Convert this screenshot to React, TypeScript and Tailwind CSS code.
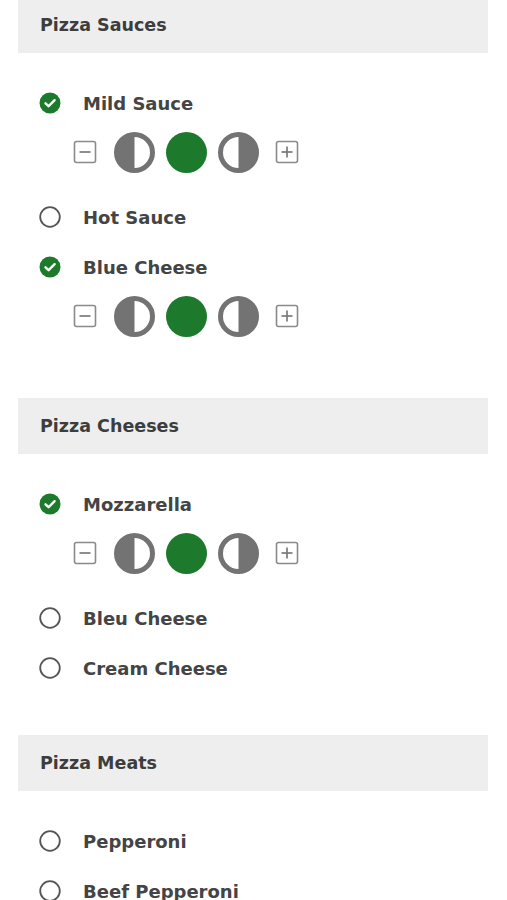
import React from "react";

type Topping = {
  name: string;
  checked: boolean;
};

type Section = {
  title: string;
  items: Topping[];
};

const SECTIONS: Section[] = [
  {
    title: "Pizza Sauces",
    items: [
      { name: "Mild Sauce", checked: true },
      { name: "Hot Sauce", checked: false },
      { name: "Blue Cheese", checked: true },
    ],
  },
  {
    title: "Pizza Cheeses",
    items: [
      { name: "Mozzarella", checked: true },
      { name: "Bleu Cheese", checked: false },
      { name: "Cream Cheese", checked: false },
    ],
  },
  {
    title: "Pizza Meats",
    items: [
      { name: "Pepperoni", checked: false },
      { name: "Beef Pepperoni", checked: false },
    ],
  },
];

const GREEN = "#1d7a2c";

const CheckIcon = ({ checked }: { checked: boolean }) => {
  if (checked) {
    return (
      <svg width="22" height="22" viewBox="0 0 22 22">
        <circle cx="11" cy="11" r="10.5" fill={GREEN} />
        <path
          d="M6.5 11.3 L9.6 14.2 L15.6 8.2"
          fill="none"
          stroke="#fff"
          strokeWidth="2.4"
          strokeLinecap="round"
          strokeLinejoin="round"
        />
      </svg>
    );
  }
  return (
    <svg width="22" height="22" viewBox="0 0 22 22">
      <circle cx="11" cy="11" r="9.8" fill="none" stroke="#555" strokeWidth="1.8" />
    </svg>
  );
};

const SquareBtn = ({ plus }: { plus?: boolean }) => (
  <svg width="24" height="24" viewBox="0 0 24 24">
    <rect x="1.5" y="1.5" width="21" height="21" rx="2" fill="none" stroke="#8a8a8a" strokeWidth="1.6" />
    <line x1="6.5" y1="12" x2="17.5" y2="12" stroke="#7a7a7a" strokeWidth="1.7" />
    {plus && <line x1="12" y1="6.5" x2="12" y2="17.5" stroke="#7a7a7a" strokeWidth="1.7" />}
  </svg>
);

// half filled circle, side = which half is grey
const HalfCircle = ({ side }: { side: "left" | "right" }) => (
  <svg width="41" height="41" viewBox="0 0 41 41">
    <circle cx="20.5" cy="20.5" r="18" fill="#fff" stroke="#737373" strokeWidth="5" />
    {side === "left" ? (
      <path d="M20.5 2 A18.5 18.5 0 0 0 20.5 39 Z" fill="#737373" />
    ) : (
      <path d="M20.5 2 A18.5 18.5 0 0 1 20.5 39 Z" fill="#737373" />
    )}
  </svg>
);

const Amounts = () => (
  <div className="flex h-[48px] mb-[16px] items-center pl-[55px]">
    <SquareBtn />
    <div className="ml-[17px]">
      <HalfCircle side="left" />
    </div>
    <div className="ml-[11px] w-[41px] h-[41px] rounded-full bg-[#1d7a2c]" />
    <div className="ml-[11px]">
      <HalfCircle side="right" />
    </div>
    <div className="ml-[16px]">
      <SquareBtn plus />
    </div>
  </div>
);

const ToppingRow = ({ item }: { item: Topping }) => (
  <>
    <div className="flex h-[50px] items-center pl-[21px]">
      <CheckIcon checked={item.checked} />
      <span className="ml-[22px] text-[18px] font-bold text-[#444]">{item.name}</span>
    </div>
    {item.checked && <Amounts />}
  </>
);

export default function App() {
  return (
    <div
      className="w-[507px] h-[900px] overflow-hidden bg-white pl-[18px] pr-[19px]"
      style={{ fontFamily: "'DejaVu Sans', Lato, sans-serif" }}
    >
      <div className="-mt-[3px]">
        {SECTIONS.map((section) => (
          <div key={section.title} className="pb-[42px]">
            <div className="h-[56px] flex items-center bg-[#eeeeee] pl-[22px]">
              <h2 className="text-[17.5px] font-bold text-[#3d3d3d]">{section.title}</h2>
            </div>
            <div className="pt-[25px]">
              {section.items.map((item) => (
                <ToppingRow key={item.name} item={item} />
              ))}
            </div>
          </div>
        ))}
      </div>
    </div>
  );
}
